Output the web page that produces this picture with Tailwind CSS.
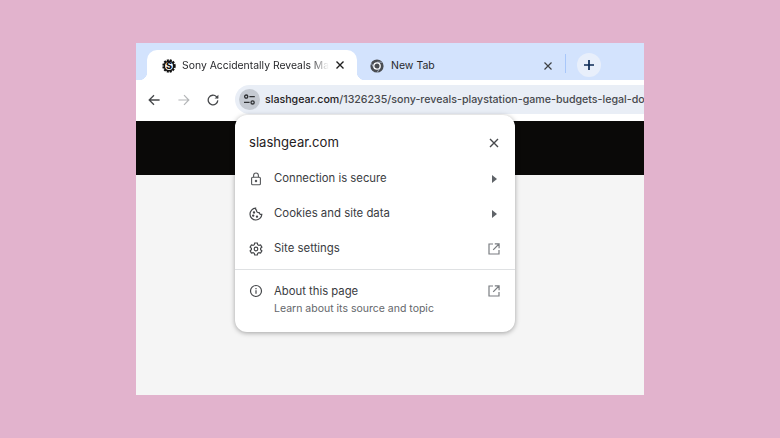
<!DOCTYPE html>
<html lang="en">
<head>
    <meta charset="UTF-8">
    <title>Connection popup</title>
    <script src="https://cdn.jsdelivr.net/npm/@tailwindcss/browser@4"></script>
</head>
<body class="bg-[#e2b3cd] w-[780px] h-[438px] overflow-hidden pt-[43px] pl-[136px] font-['Inter','Liberation_Sans',sans-serif]">
    <div class="relative w-[508px] h-[352px] overflow-hidden bg-[#f5f5f5] flex flex-col">
        <!-- Tab strip -->
        <div class="h-[37px] shrink-0 bg-[#d3e3fd] flex items-end pl-[11px]">
            <div class="relative w-[210px] h-[30px] bg-white rounded-t-[10px] flex items-center pl-[15px] pr-[12px]">
                <span class="absolute left-[-8px] bottom-0 w-[8px] h-[8px] bg-[radial-gradient(circle_at_0_0,#d3e3fd_8px,#fff_8.5px)]"></span>
                <span class="absolute right-[-8px] bottom-0 w-[8px] h-[8px] bg-[radial-gradient(circle_at_100%_0,#d3e3fd_8px,#fff_8.5px)]"></span>
                <svg class="w-[14px] h-[14px] shrink-0 mt-px" viewBox="0 0 14 14">
                    <circle cx="7" cy="7" r="5.8" fill="none" stroke="#111" stroke-width="1.8" stroke-dasharray="2 1.05"/>
                    <circle cx="7" cy="7" r="4.7" fill="#fff" stroke="#111" stroke-width="1.6"/>
                    <text x="7" y="10.1" text-anchor="middle" font-size="9" font-weight="800" fill="#111" font-family="Inter, sans-serif">S</text>
                </svg>
                <span class="ml-[6px] mt-px w-[147px] whitespace-nowrap text-[10.4px] text-[#28292c] [mask-image:linear-gradient(90deg,#000_128px,transparent_147px)]">Sony Accidentally Reveals Ma</span>
                <svg class="ml-auto w-[10px] h-[10px]" viewBox="0 0 10 10"><path d="M1.5 1.5l7 7M8.5 1.5l-7 7" stroke="#1f1f1f" stroke-width="1.4"/></svg>
            </div>
            <div class="h-[30px] w-[198px] ml-[5px] flex items-center pl-[8px] pr-[7px]">
                <svg class="w-[14px] h-[14px] shrink-0 mt-px" viewBox="0 0 14 14">
                    <circle cx="7" cy="7" r="6.6" fill="#4a4d52"/>
                    <circle cx="7" cy="7" r="3.2" fill="#4a4d52" stroke="#fff" stroke-width="1.3"/>
                    <path d="M7 3.2h5.4M3.8 8.6L1.4 4.4M10 8.8L7.2 13.4" stroke="#d3e3fd" stroke-width=".6"/>
                </svg>
                <span class="ml-[7px] mt-px text-[10.5px] text-[#28292c]">New Tab</span>
                <svg class="ml-auto w-[10px] h-[10px] mt-px" viewBox="0 0 10 10"><path d="M1.5 1.5l7 7M8.5 1.5l-7 7" stroke="#3d4043" stroke-width="1.2"/></svg>
            </div>
            <div class="self-center mt-[4px] ml-[5px] w-px h-[19px] bg-[#a8c7fa]"></div>
            <div class="self-center mt-[7px] ml-[11px] w-[24px] h-[24px] rounded-full bg-[#e8effb] flex items-center justify-center">
                <svg class="w-[12px] h-[12px]" viewBox="0 0 12 12"><path d="M6 1v10M1 6h10" stroke="#0b2a55" stroke-width="1.7"/></svg>
            </div>
        </div>

        <!-- Toolbar -->
        <div class="h-[41px] shrink-0 bg-white flex items-center pl-[12px]">
            <svg class="w-[12px] h-[12px] shrink-0 mb-px" viewBox="0 0 12 12"><path d="M11.6 6H1.4M6 1.2L1.2 6 6 10.8" fill="none" stroke="#45474a" stroke-width="1.3"/></svg>
            <svg class="ml-[18px] w-[12px] h-[12px] shrink-0 mb-px" viewBox="0 0 12 12"><path d="M.4 6h10.2M6 1.2L10.8 6 6 10.8" fill="none" stroke="#b4b6b8" stroke-width="1.2"/></svg>
            <svg class="ml-[17px] w-[12px] h-[12px] shrink-0 mb-px" viewBox="0 0 12 12"><path d="M10.8 6.4A4.8 4.8 0 1 1 9.4 2.6L10.8 4" fill="none" stroke="#45474a" stroke-width="1.3"/><path d="M11.4.8v3.8H7.6z" fill="#45474a"/></svg>
            <div class="ml-[16px] mb-[2px] flex-1 h-[29px] rounded-l-full bg-[#e9eef6] flex items-center pl-[4px] min-w-0">
                <div class="w-[21px] h-[21px] shrink-0 rounded-full bg-[#c5cad2] flex items-center justify-center">
                    <svg class="w-[13px] h-[13px]" viewBox="0 0 13 13" fill="none" stroke="#2e3033" stroke-width="1.3"><circle cx="3.2" cy="3.6" r="1.6"/><path d="M6.4 3.6h5.4M1 9.4h5.6"/><circle cx="9.6" cy="9.4" r="1.6"/></svg>
                </div>
                <span class="ml-[5px] whitespace-nowrap text-[10.65px] font-medium text-[#47494d]"><span class="text-[#1f2022]">slashgear.com</span>/1326235/sony-reveals-playstation-game-budgets-legal-do</span>
            </div>
        </div>

        <!-- Page -->
        <div class="h-[54px] shrink-0 bg-[#0a0908]"></div>
        <div class="flex-1 bg-[#f5f5f5]"></div>

        <!-- Popup over the page -->
        <div class="absolute left-[99px] top-[72px] w-[280px] h-[217px] bg-white rounded-[12px] shadow-[0_1px_5px_rgba(0,0,0,0.35)] text-[#3a3c3f]">
            <div class="h-[46px] pt-[10px] flex items-center pl-[14px] pr-[16px]">
                <span class="text-[13.1px] text-[#1f2022]">slashgear.com</span>
                <svg class="ml-auto w-[10px] h-[10px]" viewBox="0 0 10 10"><path d="M1 1l8 8M9 1l-8 8" stroke="#46484b" stroke-width="1.4"/></svg>
            </div>
            <div class="h-[35px] flex items-center pl-[14px] pr-[18px]">
                <svg class="w-[14px] h-[14px] shrink-0" viewBox="0 0 14 14" fill="none" stroke="#55575a" stroke-width="1.1"><rect x="2.6" y="5.2" width="8.8" height="7.6" rx="1"/><path d="M4.6 5.2V3.4a2.4 2.4 0 0 1 4.8 0v1.8"/><circle cx="7" cy="9" r=".7" fill="#55575a"/></svg>
                <span class="ml-[11px] text-[11.3px]">Connection is secure</span>
                <span class="ml-auto w-0 h-0 border-y-[4px] border-y-transparent border-l-[5px] border-l-[#5f6368]"></span>
            </div>
            <div class="h-[35px] flex items-center pl-[14px] pr-[18px]">
                <svg class="w-[14px] h-[14px] shrink-0" viewBox="0 0 14 14" fill="none" stroke="#46484b" stroke-width="1.2"><path d="M6.6 1.2a5.9 5.9 0 1 0 6.2 6.2c-1.3.3-2.4-.4-2.6-1.7-1.6.2-3-1-2.7-2.6-.8-.2-1-1-.9-1.9z"/><circle cx="5" cy="5.4" r=".6" fill="#46484b"/><circle cx="4.2" cy="8.6" r=".6" fill="#46484b"/><circle cx="8" cy="9.6" r=".6" fill="#46484b"/></svg>
                <span class="ml-[11px] text-[11.4px]">Cookies and site data</span>
                <span class="ml-auto w-0 h-0 border-y-[4px] border-y-transparent border-l-[5px] border-l-[#5f6368]"></span>
            </div>
            <div class="h-[35px] flex items-center pl-[14px] pr-[15px]">
                <svg class="w-[14px] h-[14px] shrink-0" viewBox="0 0 14 14" fill="none" stroke="#46484b" stroke-width="1.2"><path d="M5.7 1.4h2.6l.4 1.7 1.2.7 1.7-.5 1.3 2.2-1.3 1.2v1.4l1.3 1.2-1.3 2.2-1.7-.5-1.2.7-.4 1.7H5.7l-.4-1.7-1.2-.7-1.7.5L1.1 9.3l1.3-1.2V6.7L1.1 5.5l1.3-2.2 1.7.5 1.2-.7z" transform="translate(0 -.4)"/><circle cx="7" cy="7" r="1.8"/></svg>
                <span class="ml-[11px] text-[11.4px]">Site settings</span>
                <svg class="ml-auto w-[12px] h-[12px]" viewBox="0 0 12 12" fill="none" stroke="#7a7d81" stroke-width="1.2"><path d="M5 1H1v10h10V7M6.8 .9h4.3v4.3M11 1L5.2 6.8"/></svg>
            </div>
            <div class="mt-[3px] border-t border-[#dfe1e3] pt-[13px] pl-[14px] pr-[15px] flex items-start">
                <svg class="mt-px w-[14px] h-[14px] shrink-0" viewBox="0 0 14 14" fill="none" stroke="#46484b" stroke-width="1.2"><circle cx="7" cy="7" r="5.5"/><path d="M7 6.2v3.6M7 4v1.2"/></svg>
                <div class="ml-[11px]">
                    <div class="text-[11.3px] leading-[16px]">About this page</div>
                    <div class="text-[10.5px] leading-[16px] text-[#63666a] mt-[2px]">Learn about its source and topic</div>
                </div>
                <svg class="mt-[2px] ml-auto w-[12px] h-[12px]" viewBox="0 0 12 12" fill="none" stroke="#7a7d81" stroke-width="1.2"><path d="M5 1H1v10h10V7M6.8 .9h4.3v4.3M11 1L5.2 6.8"/></svg>
            </div>
        </div>
    </div>
</body>
</html>
